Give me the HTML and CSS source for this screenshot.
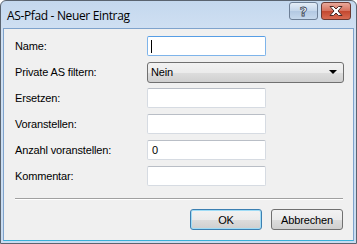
FILE: index.html
```html
<!DOCTYPE html>
<html lang="de">
<head>
  <meta charset="UTF-8">
  <title>AS-Pfad - Neuer Eintrag</title>
  <link rel="stylesheet" href="styles.css">
</head>
<body>
  <div class="window">
    <div class="titlebar">
      <span class="title">AS-Pfad - Neuer Eintrag</span>
      <div class="caption-buttons">
        <div class="cap-btn help"><span>?</span></div>
        <div class="cap-btn close">
          <svg width="14" height="10" viewBox="0 0 14 10">
            <polygon points="1,0.5 4.5,0.5 7,3 9.5,0.5 13,0.5 9,5 13,9.5 9.5,9.5 7,7 4.5,9.5 1,9.5 5,5" fill="#fff" stroke="#4a2a26" stroke-width="1" stroke-linejoin="round"/>
          </svg>
        </div>
      </div>
    </div>

    <div class="client">
      <div class="form">
        <label>Name:</label>
        <div class="field focused"><span class="caret"></span></div>

        <label>Private AS filtern:</label>
        <div class="select">
          <span>Nein</span>
          <span class="arrow"></span>
        </div>

        <label>Ersetzen:</label>
        <div class="field"></div>

        <label>Voranstellen:</label>
        <div class="field"></div>

        <label>Anzahl voranstellen:</label>
        <div class="field">0</div>

        <label>Kommentar:</label>
        <div class="field"></div>
      </div>

      <div class="separator"></div>

      <div class="actions">
        <div class="btn default">OK</div>
        <div class="btn">Abbrechen</div>
      </div>
    </div>
  </div>
</body>
</html>
```

FILE: styles.css
```css
body {
  margin: 0;
  font-family: "Liberation Sans", Arial, sans-serif;
  font-size: 11px;
  letter-spacing: -0.15px;
  color: #000;
  background: #fff;
}

.window {
  width: 357px;
  height: 244px;
  box-sizing: border-box;
  border: 1px solid #5a6470;
  border-radius: 6px 6px 0 0;
  background: linear-gradient(#c4d8ee, #d0e0f2 30px, #c9dcf1);
  display: flex;
  flex-direction: column;
}

.titlebar {
  height: 27px;
  display: flex;
  align-items: flex-start;
  padding: 0 5px 0 6px;
}

.title {
  font-family: "Open Sans", "Liberation Sans", sans-serif;
  font-size: 12px;
  color: #000;
  margin-top: 6px;
  letter-spacing: -0.35px;
}

.caption-buttons {
  margin-left: auto;
  margin-top: 1px;
  display: flex;
  gap: 3px;
}

.cap-btn {
  height: 18px;
  box-sizing: border-box;
  border: 1px solid #6d7f96;
  border-radius: 3px;
  display: flex;
  align-items: center;
  justify-content: center;
}

.help {
  width: 29px;
  background: linear-gradient(#e4edf7, #c3d5ea 50%, #b2c8e2 51%, #c6d8ec);
}

.help span {
  font-family: "DejaVu Sans", sans-serif;
  font-weight: bold;
  font-size: 13px;
  color: #fff;
  -webkit-text-stroke: 0.8px #3a4658;
  line-height: 1;
}

.close {
  width: 30px;
  border-color: #6b3a33;
  background: linear-gradient(#e9a99b, #d6705c 50%, #c3472f 51%, #d86b52);
}

.client {
  flex: 1;
  margin: 0 2px 2px 2px;
  border: 1px solid #7fa3cc;
  border-bottom-color: #3ab0d8;
  background: #f0f0f0;
  padding: 7px 10px 0 10px;
  display: flex;
  flex-direction: column;
}

.form {
  display: grid;
  grid-template-columns: 133px 1fr;
  grid-auto-rows: 20px;
  row-gap: 6px;
  align-items: center;
}

.form label {
  padding-left: 1px;
}

.field {
  width: 119px;
  height: 20px;
  box-sizing: border-box;
  border: 1px solid #d6dbe2;
  border-top-color: #b9bec6;
  border-radius: 2px;
  background: #fff;
  padding: 0 4px;
  display: flex;
  align-items: center;
}

.field.focused {
  border-color: #7eb4ea;
  border-top-color: #569de5;
}

.caret {
  width: 1px;
  height: 13px;
  background: #000;
  margin-left: -1px;
}

.select {
  width: 197px;
  height: 21px;
  box-sizing: border-box;
  border: 1px solid #707070;
  border-radius: 3px;
  background: linear-gradient(#f2f2f2, #ebebeb 50%, #dddddd 51%, #cfcfcf);
  display: flex;
  align-items: center;
  padding: 0 6px 0 3px;
}

.arrow {
  margin-left: auto;
  width: 0;
  height: 0;
  border-left: 4px solid transparent;
  border-right: 4px solid transparent;
  border-top: 4px solid #000;
}

.separator {
  height: 0;
  border-top: 1px solid #a0a0a0;
  border-bottom: 1px solid #fff;
  margin: 12px 0 0 1px;
}

.actions {
  margin-top: 9px;
  display: flex;
  justify-content: flex-end;
  gap: 9px;
}

.btn {
  width: 72px;
  height: 21px;
  box-sizing: border-box;
  border: 1px solid #707070;
  border-radius: 3px;
  background: linear-gradient(#f2f2f2, #ebebeb 50%, #dddddd 51%, #cfcfcf);
  display: flex;
  align-items: center;
  justify-content: center;
}

.btn.default {
  border-color: #3c7fb1;
  box-shadow: inset 0 0 0 1px #9fdcf6;
}
```
